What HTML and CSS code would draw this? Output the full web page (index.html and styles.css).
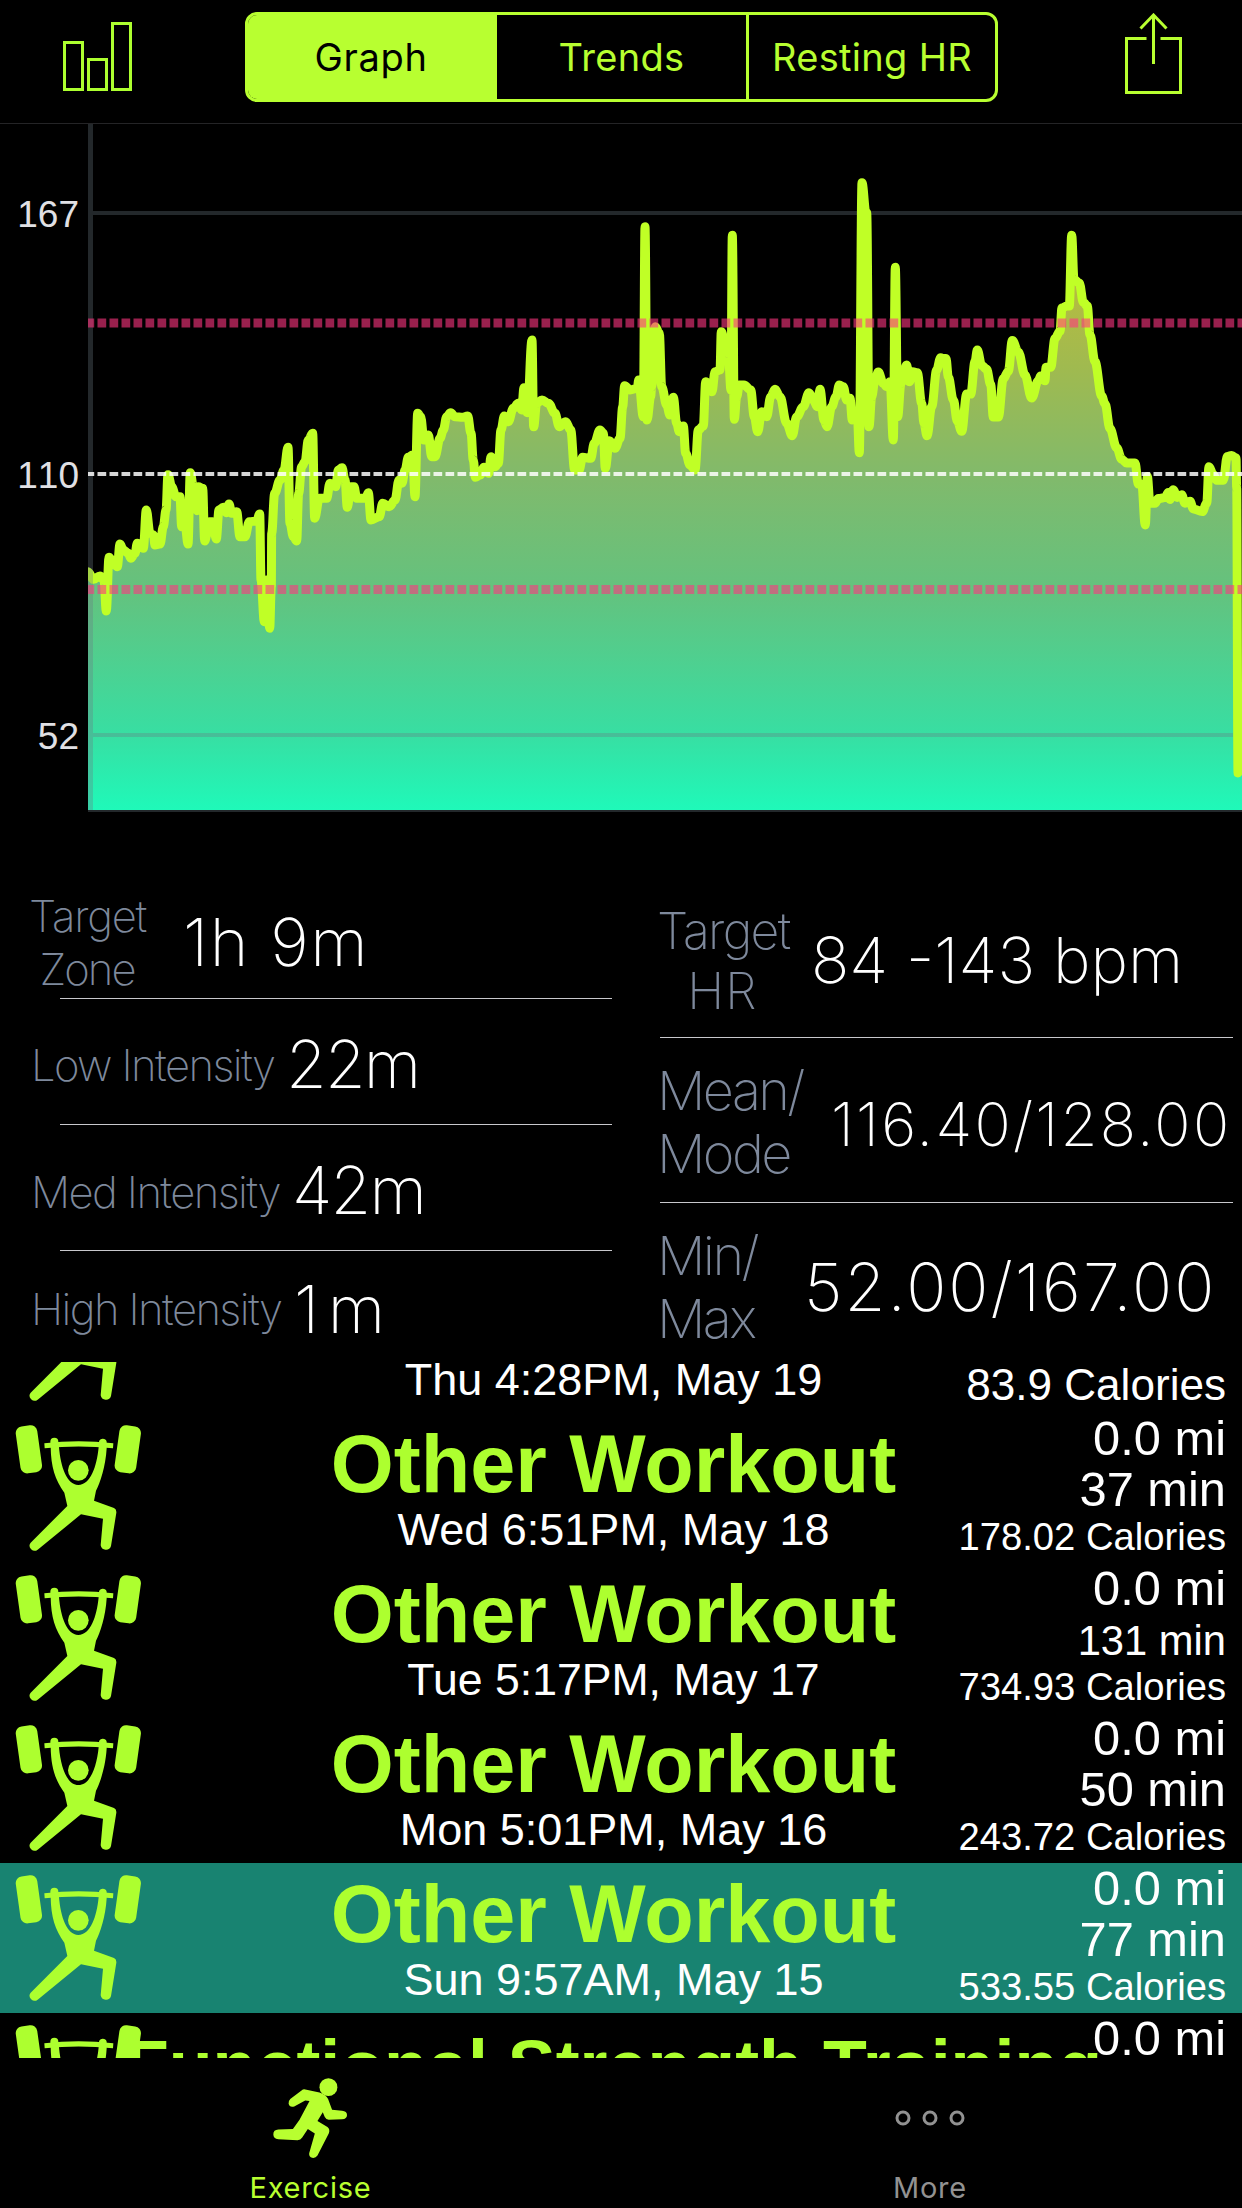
FILE: index.html
```html
<!DOCTYPE html>
<html lang="en">
<head>
<meta charset="utf-8">
<title>Exercise</title>
<link rel="stylesheet" href="styles.css">
</head>
<body>
<svg class="defs" aria-hidden="true">
  <symbol id="lifter" viewBox="45 225 378 378">
    <rect x="54" y="227" width="65" height="142" rx="20" transform="rotate(-8 87 297)"/>
    <rect x="351" y="227" width="65" height="142" rx="20" transform="rotate(8 383 297)"/>
    <path d="M133 280Q235 267 340 280L339 295Q235 284 134 295Z"/>
    <circle cx="235" cy="361" r="31"/>
    <path d="M151 275A12 12 0 0 1 175 275L177 292C182 350 200 405 235 405C272 405 290 350 296 292L297 275A12 12 0 0 1 320 275L320 295C317 350 300 400 288 422L282 452L342 474Q350 478 349 488L333 588A16 16 0 0 1 302 586L309 506L243 493L113 599A15 15 0 0 1 92 578L202 468L193 428C165 390 153 350 152 292Z"/>
  </symbol>
</svg>

<header class="nav">
  <svg class="nav-bars" viewBox="0 0 70 69"><path d="M1.5 20.5h18v47h-18zM25.5 37.5h18v30h-18zM49.500 1.500h18v66h-18z"/></svg>
  <div class="segmented">
    <div class="segment segment-on">Graph</div>
    <div class="segment">Trends</div>
    <div class="segment">Resting HR</div>
  </div>
  <svg class="nav-share" viewBox="0 0 58 81"><path d="M21.500 25.500H1.500v54h54v-54h-20M28.500 51V3M15.500 15.500L28.500 2L41.500 15.500"/></svg>
</header>

<main>
  <svg class="chart" viewBox="0 124 1242 688">
    <defs>
      <linearGradient id="heat" gradientUnits="userSpaceOnUse" x1="0" y1="260" x2="0" y2="810">
        <stop offset="0" stop-color="#bdbb3c"/>
        <stop offset=".2" stop-color="#9fba50"/>
        <stop offset=".4" stop-color="#80ba6c"/>
        <stop offset=".6" stop-color="#64c27e"/>
        <stop offset=".86" stop-color="#38dea2"/>
        <stop offset="1" stop-color="#1ff9b9"/>
      </linearGradient>
      <clipPath id="plot"><rect x="88" y="124" width="1154" height="688"/></clipPath>
    </defs>
    <g class="chart-grid"><rect x="93" y="211" width="1149" height="4"/></g>
    <g clip-path="url(#plot)">
      <path id="area" fill="url(#heat)"/>
      <path class="chart-line" id="line"/>
    </g>
    <g class="chart-grid">
      <rect x="88" y="124" width="5" height="686"/>
      <rect x="93" y="733" width="1140" height="4"/>
      <rect x="88" y="810" width="1154" height="2"/>
    </g>
    <path class="zone" d="M88 323H1242M88 589.500H1242"/>
    <path class="mean" d="M88 474H1242"/>
    <g class="chart-labels">
      <text x="79" y="227">167</text>
      <text x="79" y="488">110</text>
      <text x="79" y="749">52</text>
    </g>
  </svg>

  <section class="stats">
    <div class="stats-left">
      <div class="stat stat-zone"><div class="label">Target<br><span class="tight">Zone</span></div><div class="value">1h 9m</div></div>
      <hr>
      <div class="stat stat-low"><div class="label">Low Intensity</div><div class="value">22m</div></div>
      <hr>
      <div class="stat stat-med"><div class="label">Med Intensity</div><div class="value">42m</div></div>
      <hr>
      <div class="stat stat-high"><div class="label">High Intensity</div><div class="value">1m</div></div>
    </div>
    <div class="stats-right">
      <div class="stat stat-hr"><div class="label">Target<br><span class="wide">HR</span></div><div class="value">84 -143 bpm</div></div>
      <hr>
      <div class="stat stat-mean"><div class="label">Mean/<br>Mode</div><div class="value">116.40/128.00</div></div>
      <hr>
      <div class="stat stat-min"><div class="label">Min/<br>Max</div><div class="value">52.00/167.00</div></div>
    </div>
  </section>

  <section class="workouts">
    <article class="workout workout-leaving">
      <div class="main"><time>Thu 4:28PM, May 19</time></div>
      <svg class="lifter"><use href="#lifter"/></svg>
      <div class="meta"><span class="cal cal-big">83.9 Calories</span></div>
    </article>
    <article class="workout">
      <div class="main"><h2>Other Workout</h2><time>Wed 6:51PM, May 18</time></div>
      <svg class="lifter"><use href="#lifter"/></svg>
      <div class="meta"><span>0.0 mi</span><span>37 min</span><span class="cal">178.02 Calories</span></div>
    </article>
    <article class="workout">
      <div class="main"><h2>Other Workout</h2><time class="tue">Tue 5:17PM, May 17</time></div>
      <svg class="lifter"><use href="#lifter"/></svg>
      <div class="meta"><span>0.0 mi</span><span class="long">131 min</span><span class="cal">734.93 Calories</span></div>
    </article>
    <article class="workout">
      <div class="main"><h2>Other Workout</h2><time>Mon 5:01PM, May 16</time></div>
      <svg class="lifter"><use href="#lifter"/></svg>
      <div class="meta"><span>0.0 mi</span><span>50 min</span><span class="cal">243.72 Calories</span></div>
    </article>
    <article class="workout workout-selected">
      <div class="main"><h2>Other Workout</h2><time>Sun 9:57AM, May 15</time></div>
      <svg class="lifter"><use href="#lifter"/></svg>
      <div class="meta"><span>0.0 mi</span><span>77 min</span><span class="cal">533.55 Calories</span></div>
    </article>
    <article class="workout">
      <div class="main"><h2 class="small">Functional Strength Training</h2></div>
      <svg class="lifter"><use href="#lifter"/></svg>
      <div class="meta"><span>0.0 mi</span></div>
    </article>
  </section>
</main>

<nav class="tabs">
  <div class="tab tab-on">
    <svg width="75" height="82" viewBox="98 50 226 246"><circle cx="265" cy="80" r="27"/><path d="M192 86L238 96Q258 102 264 116L276 148L306 151Q321 152 321 164Q321 176 306 177L266 178Q258 178 254 170L248 156L232 182L262 200Q271 207 266 220L232 286Q226 295 216 293Q206 290 207 279L224 220L203 206L186 232Q181 240 172 240L114 237Q99 235 99 222Q99 209 114 208L158 206L178 178L208 122L195 120L162 138Q148 142 145 130Q144 122 150 116L184 90Q188 86 192 86Z"/></svg>
    <span>Exercise</span>
  </div>
  <div class="tab tab-more">
    <svg width="72" height="82" viewBox="0 0 72 82"><g fill="none" stroke="#929292" stroke-width="3"><circle cx="9" cy="41" r="6"/><circle cx="36" cy="41" r="6"/><circle cx="63" cy="41" r="6"/></g></svg>
    <span>More</span>
  </div>
</nav>
<script src="chart.js"></script>
</body>
</html>
```

FILE: styles.css
```css
* { box-sizing: border-box; }

body {
  margin: 0;
  width: 1242px;
  height: 2208px;
  overflow: hidden;
  background: #000;
  color: #fff;
  font-family: Inter, "Liberation Sans", sans-serif;
}

.defs { display: none; }

.nav {
  display: flex;
  align-items: flex-start;
  height: 124px;
  padding: 12px 59px 0 63px;
  border-bottom: 1px solid #242426;
}
.nav svg { fill: none; stroke: #b8ff30; stroke-width: 3; flex: none; }
.nav .nav-bars { width: 70px; height: 69px; margin-top: 10px; stroke: #adff2f; }
.nav-share { width: 58px; height: 81px; margin: 1px 0 0 127px; }
.segmented {
  display: grid;
  grid-template-columns: 246px 252px 1fr;
  flex: none;
  width: 753px;
  height: 90px;
  margin-left: 112px;
  border: 3px solid #b8ff30;
  border-radius: 12px;
  overflow: hidden;
}
.segment {
  border-left: 3px solid #b8ff30;
  color: #b8ff30;
  font-size: 38px;
  letter-spacing: .3px;
  line-height: 84px;
  text-align: center;
}
.segment-on { background: #b8ff30; color: #000; border-left: 0; letter-spacing: .7px; }

.chart { display: block; width: 1242px; height: 688px; }
.chart-line {
  fill: none;
  stroke: #c0ff26;
  stroke-width: 9;
  stroke-linejoin: round;
  stroke-linecap: round;
}
.chart-grid { fill: rgba(105, 120, 130, .33); }
.zone { stroke: #ff3580; stroke-opacity: .6; stroke-width: 9; stroke-dasharray: 8.7 3.3; stroke-dashoffset: 2.5; }
.mean { stroke: #fff; stroke-opacity: .84; stroke-width: 4; stroke-dasharray: 8.7 3.3; stroke-dashoffset: 2.5; }
.chart-labels { fill: #e0e0e4; font: 37px "Liberation Sans", sans-serif; font-kerning: none; text-anchor: end; }

.stats { display: grid; grid-template-columns: 657px 1fr; height: 550px; }
.stats-left, .stats-right { display: flex; flex-direction: column; }
.stats hr { width: 100%; height: 1px; margin: 0; border: 0; background: #c8c8cc; flex: none; }
.stats-left hr { width: 552px; margin-left: 60px; }
.stats-right hr { width: 573px; margin-left: 3px; }
.stat { display: flex; align-items: center; flex: none; white-space: nowrap; }
.stats-left .stat { padding-left: 31px; }
.label { color: #7e899c; font-weight: 200; }
.value { font-weight: 180; line-height: 80px; }
.stats-left .label { font-size: 43.6px; line-height: 53px; letter-spacing: -1.6px; }
.stats-left .value { font-size: 66px; letter-spacing: -1.8px; }
.stats-left .label .tight { letter-spacing: -2px; }
.wide { letter-spacing: 1.2px; }

.stats-left .stat-zone { height: 186px; padding: 75px 0 0 29px; }
.stats-left .stat-zone .label { width: 116px; margin-right: 38px; text-align: center; letter-spacing: -1.2px; }
.stats-left .stat-zone .value { padding-bottom: 2px; letter-spacing: 1.6px; }
.stat-low { height: 125px; padding-top: 8px; }
.stat-low .label { width: 255px; }
.stat-med { height: 125px; padding-top: 9px; }
.stat-med .label { width: 261px; }
.stat-low .value, .stat-med .value { padding-bottom: 4px; }
.stat-high { height: 111px; padding-top: 5px; }
.stat-high .label { width: 263px; }
.stats-left .stat-high .value { letter-spacing: 8.700px; }

.stat-hr { height: 225px; padding-top: 72px; }
.stat-hr .label { width: 131px; margin-right: 23px; font-size: 50px; line-height: 60px; letter-spacing: -1.7px; text-align: center; }
.stat-hr .value { font-size: 63.5px; letter-spacing: 0; padding-bottom: 1px; }
.stat-mean { height: 164px; padding-top: 3px; }
.stat-mean .label, .stat-min .label { font-size: 54px; line-height: 63px; letter-spacing: -2.600px; }
.stat-mean .label { width: 174px; }
.stat-mean .value { padding-top: 5px; font-size: 60px; letter-spacing: 2.3px; }
.stat-min { height: 159px; padding-top: 8px; }
.stat-min .label { width: 147px; }
.stat-min .value { font-size: 66.5px; letter-spacing: 2px; }

.workouts { height: 696px; overflow: hidden; font-family: "Liberation Sans", Arial, sans-serif; }
.workout { display: grid; grid-template-columns: 141px 1fr 320px; height: 150px; }
.workout > * { grid-row: 1; }
.workout-leaving { margin-top: -99px; }
.workout-leaving > div { justify-content: flex-end; }
.workout-leaving .main { padding-bottom: 10px; }
.workout-leaving .meta { padding-bottom: 5px; }
.workout-selected { background: #188371; }
.lifter { grid-column: 1; width: 126px; height: 126px; margin: 12px 0 0 15px; fill: #adff2f; }
.main {
  grid-column: 1 / -1;
  display: flex;
  flex-direction: column;
  align-items: center;
  padding: 10px 15px 0 0;
}
.main h2 { margin: 0; color: #adff2f; font-size: 81px; font-weight: 700; line-height: 83px; white-space: nowrap; }
.main h2.small { font-size: 71.8px; line-height: 87px; }
.main time { font-size: 45px; line-height: 47px; }
.main .tue { font-size: 44.6px; }
.meta {
  grid-column: 3;
  display: flex;
  flex-direction: column;
  align-items: flex-end;
  padding-right: 16px;
  font-size: 48.800px;
  line-height: 50.500px;
  white-space: nowrap;
}
.meta .long { padding-top: 3px; font-size: 41.700px; line-height: 47.500px; }
.meta .cal { font-size: 38.2px; line-height: 46px; }
.meta .cal-big { font-size: 44.1px; }

.tabs { display: grid; grid-template-columns: 1fr 1fr; height: 150px; }
.tab {
  display: flex;
  flex-direction: column;
  align-items: center;
  padding-top: 19px;
  gap: 11px;
  color: #929292;
  font-size: 29px;
  line-height: 36px;
  letter-spacing: .8px;
}
.tab-on { color: #b8ff30; fill: #b8ff30; }
.tab-more { padding-right: 3px; }
```

FILE: chart.js
```js
// Heart-rate samples in blocks: origin of the block, its scale, then x,y pairs.
const blocks = [
  [80, 320, 3, 3, '24,755 40,778 60,768 72,780 79,873 87,712 95,720 112,740 120,672 130,690 145,700 152,715 165,700 172,670 190,685 199,570 210,640 220,645 225,675 240,672 250,620 258,570 264,464 275,500 288,530 300,530 305,620 316,620 324,672 331,458 340,500 351,572 355,500 368,505 374,663 388,605 398,605 409,657 417,570 430,562 440,578 447,552 455,580 470,575 480,650 495,650 508,605 530,603 539,582 543,780 553,905 560,780 569,925 574,800 575,640 584,520 600,480 612,450 624,382 630,610 640,650 650,663 656,520 665,440 675,425 685,360 698,340 704,595 718,535 740,535 750,490 767,500 775,450 786,443 795,480 802,562 812,500 822,500 830,535 857,535 865,518 873,600 898,590 908,550 928,560 945,540 957,480 966,490 975,450 985,412 998,405 1005,530'],
  [400, 320, 3, 3, '53,280 62,290 72,360 85,345 95,410 105,410 120,355 130,330 140,290 152,278 165,290 188,292 203,288 213,340 220,420 226,472 240,465 252,442 266,460 273,410 285,440 295,430 303,330 313,288 325,305 340,265 355,250 365,270 372,203 382,278 396,60 401,320 410,250 426,240 445,250 465,280 478,320 497,305 512,330 524,450 537,450 548,412 572,415 583,370 600,330 610,340 616,445 628,362 645,385 660,355 668,260 674,197 690,210 712,205'],
  [620, 170, 3, 3, '56,630 70,740 75,170 81,750 92,680 95,650 106,470 118,490 125,650 140,705 150,735 160,682 170,760 178,785 190,768 197,850 210,885 225,900 235,780 250,768 257,635 276,665 285,605 300,600 304,485 315,520 325,550 333,660 337,196 343,748 350,680 358,645 372,645 392,660 403,740 413,785 425,725 440,740 452,680 465,658 480,680 500,760 517,797 530,740 550,710 567,668 580,690 592,710 600,658 612,750 621,770 635,710 648,680 658,645 670,650 680,690 690,685 697,750 712,735 718,848 726,38 738,130 740,128 747,770 755,680 765,630 775,606 790,640 800,650 810,635 820,810 826,292 833,740 843,640 860,585 868,635 878,605 892,608 905,700 912,760 921,797 935,710 950,600 962,563'],
  [940, 220, 3, 2.613, '8,362 18,362 25,410 40,470 52,525 65,552 80,455 92,455 105,370 112,340 125,380 140,390 152,430 160,515 175,515 190,415 205,395 217,315 235,345 255,405 275,465 295,420 302,408 315,420 318,385 332,385 345,310 360,290 366,230 380,225 388,225 395,40 402,155 418,165 430,215 442,225 450,300 465,370 485,460 495,480 510,545 530,595 545,625 560,635 585,635 595,690 605,690 616,797 622,670 630,740 645,740 655,728 675,725 685,712 690,730 700,705 712,725 725,718 735,740 750,735 760,755 787,762 800,740 807,645 820,665 830,680 850,680 862,618 875,615 888,622 890,700 894,1445 906,1330']
];

const points = blocks.flatMap(([ox, oy, sx, sy, list]) =>
  list.split(' ').map(pair => {
    const [x, y] = pair.split(',').map(Number);
    return [ox + x / sx, oy + y / sy];
  }));

// Each sample is joined to the next with a flat-ended curve, so peaks keep their height.
const f = n => n.toFixed(1);
let trace = `${f(points[0][0])} ${f(points[0][1])}`;
for (let i = 1; i < points.length; i++) {
  const [x0, y0] = points[i - 1];
  const [x1, y1] = points[i];
  const dx = (x1 - x0) * 0.38;
  trace += `C${f(x0 + dx)} ${f(y0)} ${f(x1 - dx)} ${f(y1)} ${f(x1)} ${f(y1)}`;
}
document.getElementById('line').setAttribute('d', 'M' + trace);
document.getElementById('area').setAttribute('d', 'M88 810L' + trace + 'L1242 810Z');
```
